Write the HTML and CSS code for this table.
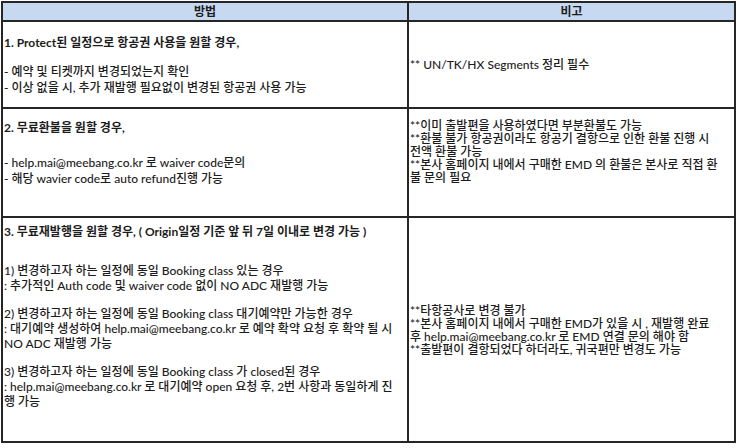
FILE: index.html
```html
<!DOCTYPE html>
<html lang="ko">
<head>
<meta charset="utf-8">
<link rel="stylesheet" href="styles.css">
</head>
<body>
<table class="sheet">
  <colgroup><col class="c-left"><col class="c-right"></colgroup>
  <thead>
    <tr class="head-row"><th>방법</th><th>비고</th></tr>
  </thead>
  <tbody>
    <tr>
      <td class="left pad1 h1l">
        <div class="title gap1">1. Protect된 일정으로 항공권 사용을 원할 경우,</div>
        <div>- 예약 및 티켓까지 변경되었는지 확인</div>
        <div>- 이상 없을 시, 추가 재발행 필요없이 변경된 항공권 사용 가능</div>
      </td>
      <td class="right mid h1r">** UN/TK/HX Segments 정리 필수</td>
    </tr>
    <tr>
      <td class="left pad2 h2l">
        <div class="title gap2">2. 무료환불을 원할 경우,</div>
        <div>- help.mai@meebang.co.kr 로 waiver code문의</div>
        <div>- 해당 wavier code로 auto refund진행 가능</div>
      </td>
      <td class="right pad2r h2r">
        <div>**이미 출발편을 사용하였다면 부분환불도 가능</div>
        <div>**환불 불가 항공권이라도 항공기 결항으로 인한 환불 진행 시</div>
        <div>전액 환불 가능</div>
        <div>**본사 홈페이지 내에서 구매한 EMD 의 환불은 본사로 직접 환</div>
        <div>불 문의 필요</div>
      </td>
    </tr>
    <tr>
      <td class="left pad3 lh15 h3l">
        <div class="title gap3">3. 무료재발행을 원할 경우, ( Origin일정 기준 앞 뒤 7일 이내로 변경 가능 )</div>
        <div>1) 변경하고자 하는 일정에 동일 Booking class 있는 경우</div>
        <div>: 추가적인 Auth code 및 waiver code 없이 NO ADC 재발행 가능</div>
        <div class="blank"></div>
        <div>2) 변경하고자 하는 일정에 동일 Booking class 대기예약만 가능한 경우</div>
        <div>: 대기예약 생성하여 help.mai@meebang.co.kr 로 예약 확약 요청 후 확약 될 시</div>
        <div>NO ADC 재발행 가능</div>
        <div class="blank"></div>
        <div>3) 변경하고자 하는 일정에 동일 Booking class 가 closed된 경우</div>
        <div>: help.mai@meebang.co.kr 로 대기예약 open 요청 후, 2번 사항과 동일하게 진</div>
        <div>행 가능</div>
      </td>
      <td class="right mid h3r">
        <div>**타항공사로 변경 불가</div>
        <div>**본사 홈페이지 내에서 구매한 EMD가 있을 시 , 재발행 완료</div>
        <div>후 help.mai@meebang.co.kr 로 EMD 연결 문의 해야 함</div>
        <div>**출발편이 결항되었다 하더라도, 귀국편만 변경도 가능</div>
      </td>
    </tr>
  </tbody>
</table>
</body>
</html>
```

FILE: styles.css
```css
html, body {
  margin: 0;
  padding: 0;
  background: #ffffff;
}

body {
  font-family: Lato, "Noto Sans CJK KR", sans-serif;
  font-size: 12px;
  font-weight: 500;
  color: #1c1c1c;
}

.sheet {
  margin: 1px 0 0 1px;
  width: 733px;
  table-layout: fixed;
  border-collapse: collapse;
}

.c-left { width: 406px; }
.c-right { width: 327px; }

.sheet th,
.sheet td {
  border: 2px solid #262626;
  padding: 0 0 0 1px;
  white-space: nowrap;
  overflow: hidden;
}

.sheet .head-row th {
  height: 17px;
  background: #c6d9f1;
  font-weight: 700;
  text-align: center;
  line-height: 17px;
  padding: 0;
}

.sheet .left {
  vertical-align: top;
  line-height: 16px;
}

.sheet .right {
  line-height: 13px;
}

.sheet .mid { vertical-align: middle; }

.sheet .lh15 { line-height: 15px; }

.title { font-weight: 700; }

.sheet .pad1 { padding-top: 13px; }
.sheet .pad2 { padding-top: 11px; }
.sheet .pad3 { padding-top: 6px; }
.sheet .pad2r { vertical-align: top; padding-top: 10px; }

/* cell heights exclude the top padding */
.sheet .h1l { height: 72px; }
.sheet .h1r { height: 85px; }
.sheet .h2l { height: 96px; }
.sheet .h2r { height: 97px; }
.sheet .h3l { height: 217px; }
.sheet .h3r { height: 223px; }

.gap1 { margin-bottom: 13px; }
.gap2 { margin-bottom: 19px; }
.gap3 { margin-bottom: 24px; }

.blank { height: 13px; }
```
